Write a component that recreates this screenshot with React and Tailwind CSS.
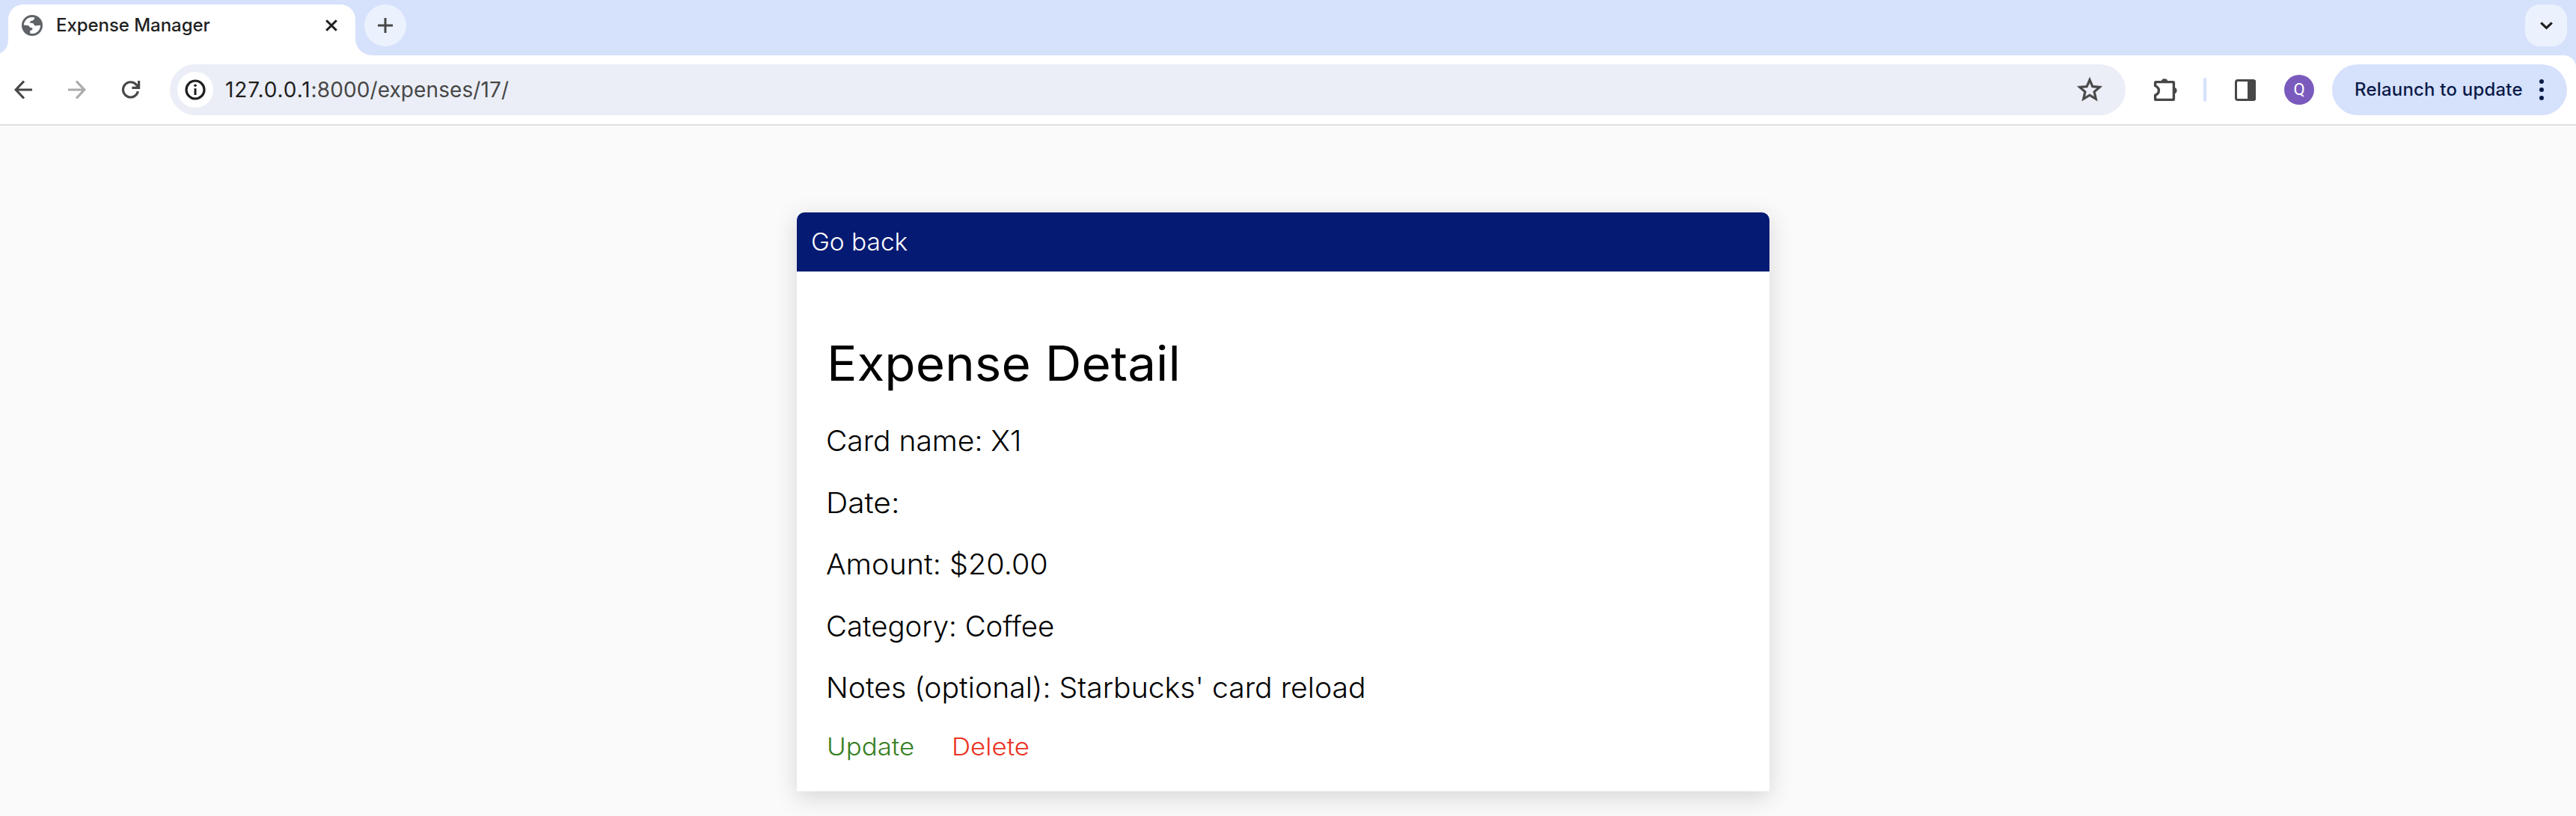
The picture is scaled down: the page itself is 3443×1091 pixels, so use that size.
import React from "react";

function GlobeIcon() {
  return (
    <svg className="ml-[18px] size-7 shrink-0" viewBox="0 0 28 28">
      <circle cx="14" cy="14" r="14" fill="#5f6368" />
      <path
        d="M2.8 13.6C3.2 7.5 8 3 14 2.9L17.2 3.3C17.4 6 15.6 7.8 13 7.8C11.6 7.8 12.2 9.8 10 10.6C12.5 11.3 14.8 10.2 16.1 12.2C17 13.8 17.6 14.8 19.4 14.2L25 13.8C25 20 20.4 25.1 14 25.1L11.2 24.6V20.8C15 20.9 15.6 17 12.6 17C10 17 10.6 14.2 8 14.1Z"
        fill="#fff"
      />
    </svg>
  );
}

function Arrow({ className }) {
  return (
    <svg className={className} viewBox="0 0 25 26" fill="none" stroke="currentColor" strokeWidth="3.2">
      <path d="M24 13H2.5M13 1.5L2.2 13L13 24.5" />
    </svg>
  );
}

function ReloadIcon() {
  return (
    <svg className="ml-[47px] size-[26px] shrink-0 text-[#474747]" viewBox="0 0 26 26" fill="none" stroke="currentColor" strokeWidth="3.2">
      <path d="M22.4 15.2A10.1 10.1 0 1 1 20.2 6.2L23.5 10" />
      <path d="M23.6 1V10.4H14.4" />
    </svg>
  );
}

function StarIcon() {
  return (
    <svg className="mr-7 size-10 shrink-0" viewBox="0 0 24 24" fill="#474747" stroke="#474747" strokeWidth="0.3">
      <path d="M22 9.24l-7.19-.62L12 2 9.19 8.63 2 9.24l5.46 4.73L5.82 21 12 17.27 18.18 21l-1.63-7.03L22 9.24zM12 15.4l-3.76 2.27 1-4.28-3.32-2.88 4.38-.38L12 6.1l1.71 4.04 4.38.38-3.32 2.88 1 4.28L12 15.4z" />
    </svg>
  );
}

function TabStrip() {
  return (
    <div className="flex h-[74px] items-start bg-[#d6e1fc]">
      <svg className="h-[74px] w-[11px] shrink-0" viewBox="0 0 11 74">
        <path d="M11 54A20 20 0 0 1 0 71.5V74H11Z" fill="#fff" />
      </svg>
      <div className="mt-1.5 flex h-[68px] w-[464px] shrink-0 rounded-t-[20px] bg-white">
        <div className="flex h-14 w-full items-center">
          <GlobeIcon />
          <span className="ml-[18px] flex-1 text-[24px] leading-none font-medium tracking-[-0.05px] whitespace-nowrap text-[#1f1f1f]">
            Expense Manager
          </span>
          <svg className="mr-6 size-4 shrink-0" viewBox="0 0 16 16" fill="none" stroke="#1f1f1f" strokeWidth="3">
            <path d="M1.2 1.2L14.8 14.8M14.8 1.2L1.2 14.8" />
          </svg>
        </div>
      </div>
      <svg className="h-[74px] w-[22px] shrink-0" viewBox="0 0 22 74">
        <path d="M0 52A22 22 0 0 0 22 74H0Z" fill="#fff" />
      </svg>
      <button className="mt-1.5 -ml-[10px] flex size-14 shrink-0 items-center justify-center rounded-full bg-[#ebf2fd]">
        <svg className="size-5" viewBox="0 0 20 20" stroke="#474747" strokeWidth="3">
          <path d="M10 0V20M0 10H20" />
        </svg>
      </button>
      <button className="mt-1.5 mr-3 ml-auto flex size-14 items-center justify-center rounded-[20px] bg-[#ebf2fd]">
        <svg className="h-[11px] w-[17px]" viewBox="0 0 17 11" fill="none" stroke="#1f1f1f" strokeWidth="3.2">
          <path d="M1.2 1.4L8.5 8.4L15.8 1.4" />
        </svg>
      </button>
    </div>
  );
}

function Toolbar() {
  return (
    <div className="bg-[#d6e1fc]">
      <div className="flex h-[94px] items-center rounded-tr-[16px] border-b-2 border-[#e0e0e0] bg-white">
        <Arrow className="ml-[19px] h-[26px] w-[25px] shrink-0 text-[#474747]" />
        <Arrow className="ml-[46px] h-[26px] w-[25px] shrink-0 rotate-180 text-[#ababab]" />
        <ReloadIcon />
        <div className="ml-[39px] flex h-[68px] w-[2614px] shrink-0 items-center rounded-full bg-[#ebeef6]">
          <div className="ml-2.5 flex size-12 items-center justify-center rounded-full bg-white">
            <svg className="size-7" viewBox="0 0 28 28">
              <circle cx="14" cy="14" r="12" fill="none" stroke="#1f1f1f" strokeWidth="3.2" />
              <path d="M14 12.2V21" stroke="#1f1f1f" strokeWidth="3" />
              <circle cx="14" cy="8.3" r="1.8" fill="#1f1f1f" />
            </svg>
          </div>
          <div className="ml-4 flex-1 text-[28px] leading-none whitespace-nowrap text-[#474747]">
            <span className="tracking-[0.9px] text-[#1f1f1f]">127.0.0.1</span>
            <span className="tracking-[0.1px]">:8000/expenses/17/</span>
          </div>
          <StarIcon />
        </div>
        <svg className="ml-[36px] h-[36px] w-[38px] shrink-0" viewBox="0 0 38 36">
          <path
            d="M5.6 7.6H27.4Q28.4 7.6 28.4 8.6V30.4Q28.4 31.4 27.4 31.4H4.6Q3.6 31.4 3.6 30.4V25.2C10 22.6 10 15.4 3.6 12.8V8.6Q3.6 7.6 4.6 7.6Z"
            fill="none"
            stroke="#474747"
            strokeWidth="3.4"
            strokeLinejoin="round"
          />
          <path d="M11.6 6.6A4.6 4.6 0 0 1 20.4 6.6ZM29.4 14.8A4.5 4.5 0 0 1 29.4 23.4Z" fill="#474747" />
        </svg>
        <div className="ml-[30px] h-8 w-1 shrink-0 rounded-full bg-[#d6e1fc]" />
        <svg className="ml-[38px] h-[29px] w-7 shrink-0" viewBox="0 0 28 29">
          <rect x="1.5" y="1.5" width="25.4" height="26" rx="2.5" fill="none" stroke="#474747" strokeWidth="3" />
          <path d="M17 1H27V28H17Z" fill="#474747" />
        </svg>
        <div className="ml-[38px] flex size-10 shrink-0 items-center justify-center rounded-full bg-[#7a5bbd] font-['Roboto'] text-[22px] leading-none text-white">
          Q
        </div>
        <button className="ml-6 flex h-[68px] w-[314px] shrink-0 items-center rounded-full bg-[#d6e1fc] text-[#0b1b48]">
          <span className="ml-[30px] text-[24px] leading-none font-medium tracking-[0.2px] whitespace-nowrap">Relaunch to update</span>
          <span className="mr-[31px] ml-auto flex flex-col gap-[5px]">
            <i className="size-1.5 rounded-full bg-current" />
            <i className="size-1.5 rounded-full bg-current" />
            <i className="size-1.5 rounded-full bg-current" />
          </span>
        </button>
      </div>
    </div>
  );
}

function Row({ children, className }) {
  return (
    <p className={`h-[82.5px] w-max origin-left text-[38px] leading-[82.5px] font-light whitespace-nowrap ${className}`}>
      {children}
    </p>
  );
}

function ExpenseCard() {
  return (
    <main className="mt-[116px] ml-[1065px] h-[774px] w-[1300px] bg-white text-black shadow-[0_8px_30px_rgba(0,0,0,0.15)]">
      <div className="h-[79px] rounded-t-[10px] bg-[#051a72] pl-[19px] text-[32px] leading-[79px] text-white">
        <a className="inline-block origin-left scale-x-[1.045] font-[350]">Go back</a>
      </div>
      <div className="pt-[60px] pl-10">
        <h1 className="w-max origin-left scale-x-[1.054] text-[64px] leading-[125px] font-[370] whitespace-nowrap">Expense Detail</h1>
        <Row className="-ml-px scale-x-[1.025]">Card name: X1</Row>
        <Row className="-ml-px scale-x-[1.07]">Date:</Row>
        <Row className="-ml-px scale-x-[1.04]">Amount: $20.00</Row>
        <Row className="-ml-px scale-x-[1.01]">Category: Coffee</Row>
        <Row className="-ml-px scale-x-[1.03]">Notes (optional): Starbucks' card reload</Row>
        <div className="flex h-[76px] text-[32px] leading-[76px] font-[330]">
          <span className="w-[167px]">
            <a className="inline-block origin-left scale-x-[1.09] text-[#377e22]">Update</a>
          </span>
          <a className="origin-left scale-x-[1.09] text-[#ea3323]">Delete</a>
        </div>
      </div>
    </main>
  );
}

export default function App() {
  return (
    <div className="h-[1091px] w-[3443px] overflow-hidden bg-[#fafafa] font-['Inter',sans-serif]">
      <TabStrip />
      <Toolbar />
      <ExpenseCard />
    </div>
  );
}
